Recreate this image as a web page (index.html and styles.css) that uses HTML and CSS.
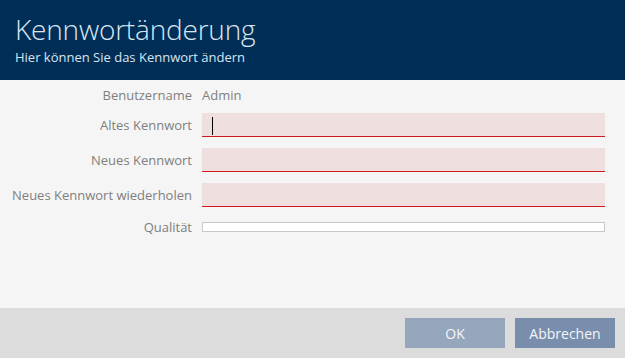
FILE: index.html
```html
<html lang="de">
<head>
    <title>Kennwortänderung</title>
    <meta charset="UTF-8">
    <meta name="viewport" content="width=device-width, initial-scale=1.0">
    <link rel="stylesheet" href="styles.css">
</head>
<body>
    <div class="dialog">
        <div class="header">
            <h1>Kennwortänderung</h1>
            <p>Hier können Sie das Kennwort ändern</p>
        </div>

        <form class="content">
            <label class="label">Benutzername</label>
            <span class="value">Admin</span>

            <label class="label" for="old">Altes Kennwort</label>
            <div class="field-wrap">
                <input class="field" type="password" id="old" autofocus>
                <span class="caret"></span>
            </div>

            <label class="label" for="new">Neues Kennwort</label>
            <input class="field" type="password" id="new">

            <label class="label" for="repeat">Neues Kennwort wiederholen</label>
            <input class="field" type="password" id="repeat">

            <label class="label">Qualität</label>
            <div class="quality"></div>
        </form>

        <div class="footer">
            <button class="btn btn-ok" type="button">OK</button>
            <button class="btn btn-cancel" type="button">Abbrechen</button>
        </div>
    </div>
</body>
</html>
```

FILE: styles.css
```css
body {
    margin: 0;
    font-family: "Open Sans", "Noto Sans", sans-serif;
    background-color: #f5f5f5;
}

.dialog {
    display: flex;
    flex-direction: column;
    height: 358px;
}

.header {
    background-color: #002e57;
    color: #d8e6f2;
    height: 80px;
    padding: 0 15px;
    box-sizing: border-box;
}

.header h1 {
    margin: 0;
    padding-top: 10px;
    font-size: 28px;
    font-weight: 300;
    line-height: 38px;
    letter-spacing: -0.2px;
}

.header p {
    margin: 0;
    font-size: 13px;
    line-height: 18px;
}

.content {
    flex: 1;
    margin: 0;
    padding: 7px 20px 0 10px;
    display: grid;
    grid-template-columns: 182px 1fr;
    column-gap: 10px;
    grid-template-rows: 15px 24px 24px 24px 18px;
    row-gap: 11px;
    align-items: center;
    align-content: start;
    font-size: 13px;
    color: #7f7f7f;
}

.label {
    text-align: right;
    white-space: nowrap;
}

.field-wrap {
    position: relative;
    height: 24px;
}

.field {
    width: 100%;
    height: 24px;
    box-sizing: border-box;
    border: none;
    border-bottom: 1px solid #d0191e;
    background-color: #f0dfdf;
    outline: none;
    padding: 0 10px;
    font-size: 13px;
    caret-color: transparent;
}

.caret {
    position: absolute;
    left: 10px;
    top: 4px;
    width: 1px;
    height: 18px;
    background-color: #000000;
}

.quality {
    height: 10px;
    box-sizing: border-box;
    border: 1px solid #c8c8c8;
    background-color: #ffffff;
}

.footer {
    height: 50px;
    background-color: #dcdcdc;
    display: flex;
    justify-content: flex-end;
    align-items: center;
    gap: 10px;
    padding-right: 10px;
}

.btn {
    width: 100px;
    height: 30px;
    border: none;
    font-family: inherit;
    font-size: 14px;
    color: #f4f6f9;
}

.btn-ok {
    background-color: #95a6bd;
}

.btn-cancel {
    background-color: #798ead;
}
```
